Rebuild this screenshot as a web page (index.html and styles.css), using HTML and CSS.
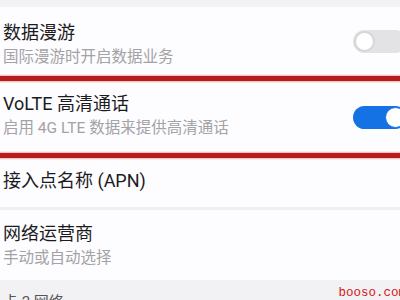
FILE: index.html
```html
<!DOCTYPE html>
<html lang="zh">
<head>
<meta charset="utf-8">
<link rel="stylesheet" href="styles.css">
</head>
<body>
<div class="page">
  <div class="top-gap"></div>
  <div class="item item-first">
    <div class="texts">
      <div class="title">数据漫游</div>
      <div class="sub">国际漫游时开启数据业务</div>
    </div>
    <div class="toggle"><span class="knob"></span></div>
  </div>
  <div class="mark"></div>
  <div class="item item-second">
    <div class="texts">
      <div class="title">VoLTE 高清通话</div>
      <div class="sub">启用 4G LTE 数据来提供高清通话</div>
    </div>
    <div class="toggle on"><span class="knob"></span></div>
  </div>
  <div class="mark"></div>
  <div class="item item-third">
    <div class="texts">
      <div class="title">接入点名称 (APN)</div>
    </div>
    <svg class="chev" width="8" height="16" viewBox="0 0 8 16"><path d="M1 1 L7 8 L1 15" fill="none" stroke="#b8b8bc" stroke-width="1.6" stroke-linecap="round" stroke-linejoin="round"/></svg>
  </div>
  <div class="divider"></div>
  <div class="item item-fourth">
    <div class="texts">
      <div class="title">网络运营商</div>
      <div class="sub">手动或自动选择</div>
    </div>
    <svg class="chev" width="8" height="16" viewBox="0 0 8 16"><path d="M1 1 L7 8 L1 15" fill="none" stroke="#b8b8bc" stroke-width="1.6" stroke-linecap="round" stroke-linejoin="round"/></svg>
  </div>
  <div class="section">
    <div class="section-title">卡 2 网络</div>
  </div>
  <div class="watermark">booso.com</div>
</div>
</body>
</html>
```
FILE: styles.css
```css
html, body {
  margin: 0;
  padding: 0;
  width: 400px;
  height: 300px;
  overflow: hidden;
  background: #f2f1f3;
}
.page {
  position: relative;
  width: 400px;
  height: 300px;
  overflow: hidden;
  display: flex;
  flex-direction: column;
  font-family: "Roboto", "Noto Sans CJK SC", sans-serif;
}
.top-gap {
  height: 7px;
  background: #f2f1f3;
  flex-shrink: 0;
}
.item {
  display: flex;
  align-items: center;
  background: #fdfcfe;
  padding-left: 3px;
  flex-shrink: 0;
}
.item-first { height: 69px; }
.item-second { height: 72px; }
.item-third { height: 49px; }
.item-fourth { height: 70px; }
.texts {
  flex: 1;
  display: flex;
  flex-direction: column;
}
.item-first .texts { margin-top: 6px; }
.item-second .texts { margin-top: -3px; }
.item-third .texts { margin-top: -3px; }
.title {
  font-size: 18px;
  line-height: 24px;
  color: #1b1b1d;
}
.sub {
  font-size: 15.5px;
  line-height: 22px;
  margin-top: 1px;
  color: #a3a2a6;
}
.toggle {
  position: relative;
  width: 54px;
  height: 23px;
  border-radius: 12px;
  background: #e3e3e5;
  margin-right: -7px;
  flex-shrink: 0;
}
.knob {
  position: absolute;
  top: 1px;
  left: 1px;
  width: 17px;
  height: 17px;
  border-radius: 50%;
  background: #ffffff;
  border: 2px solid #d6d6d8;
}
.toggle.on {
  background: #1472e4;
}
.toggle.on .knob {
  left: 32px;
  width: 19px;
  height: 19px;
  border: 1px solid #1472e4;
}
.mark {
  height: 5px;
  background: #b61d1c;
  box-shadow: 0 -1px 0 #f0c4c0, 0 1px 0 #f0c4c0, 0 -2px 0 #fbe9e6, 0 2px 0 #fbe9e6;
  flex-shrink: 0;
  position: relative;
  z-index: 1;
}
.chev {
  flex-shrink: 0;
  margin-right: -8px;
  margin-top: -4px;
}
.item-fourth .chev { margin-top: 0; }
.divider {
  height: 3px;
  background: #f0eff1;
  flex-shrink: 0;
}
.section {
  flex: 1;
  background: #f2f1f3;
  padding: 12px 0 0 3px;
}
.section-title {
  font-size: 15px;
  line-height: 20px;
  color: #555459;
}
.watermark {
  position: absolute;
  right: -6px;
  bottom: 0px;
  font-family: "Liberation Mono", monospace;
  font-size: 12.5px;
  line-height: 14px;
  color: #d8141a;
}
```
